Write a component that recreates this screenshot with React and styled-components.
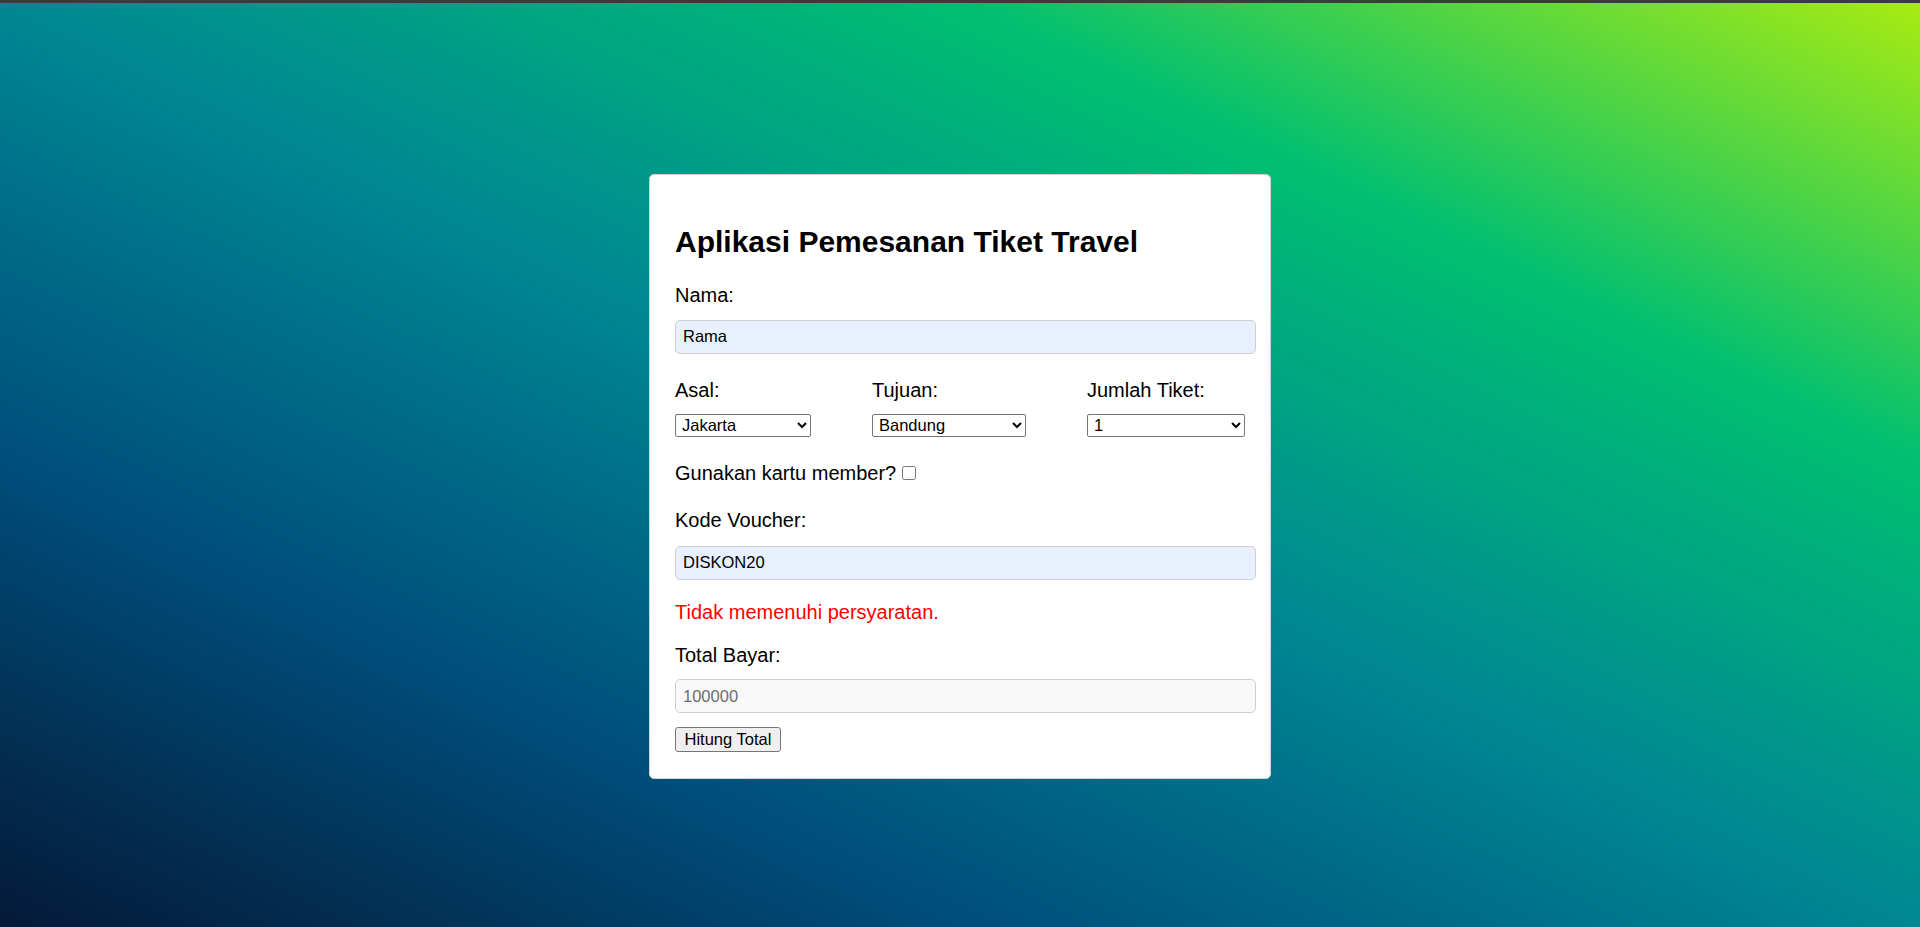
import React from "react";
import styled, { createGlobalStyle } from "styled-components";

const GlobalStyle = createGlobalStyle`
  html, body {
    margin: 0;
    padding: 0;
  }
  body {
    font-family: "Liberation Sans", Arial, sans-serif;
    color: #000;
  }
`;

const Page = styled.div`
  display: flex;
  flex-direction: column;
  min-height: 100vh;
`;

const TopStrip = styled.div`
  flex-shrink: 0;
  height: 3px;
  background-color: #3b3b3b;
`;

const Backdrop = styled.main`
  flex: 1;
  display: flex;
  justify-content: center;
  align-items: flex-start;
  padding-top: 171px;
  background: linear-gradient(to right top, #051937, #004d7a, #008793, #00bf72, #a8eb12);
`;

const Card = styled.div`
  box-sizing: border-box;
  width: 622px;
  padding: 25px 25px 26px;
  background-color: #ffffff;
  border: 1px solid #d4d4d4;
  border-radius: 5px;
`;

const Title = styled.h2`
  margin: 25px 0 25px;
  font-size: 30px;
  font-weight: 700;
`;

const Label = styled.label`
  display: block;
  font-size: 20px;
  line-height: 22.5px;
  margin-bottom: ${(p) => p.$gap || 13}px;
`;

const TextInput = styled.input`
  display: block;
  box-sizing: border-box;
  width: calc(100% + 11px);
  height: 34px;
  margin: 0 0 ${(p) => p.$after || 25}px;
  padding: 0 7px;
  font-family: "Liberation Sans", Arial, sans-serif;
  font-size: 16.5px;
  color: ${(p) => (p.readOnly ? "#6d6d6d" : "#000")};
  background-color: ${(p) => (p.readOnly ? "#f9f9f9" : "#e8f0fe")};
  border: 1px solid #cfcfcf;
  border-radius: 5px;
  outline: none;
`;

const SelectRow = styled.div`
  display: flex;
  justify-content: space-between;
  margin-bottom: 25px;
`;

const SelectColumn = styled.div`
  display: flex;
  flex-direction: column;
`;

const Select = styled.select`
  box-sizing: border-box;
  width: ${(p) => p.$width}px;
  height: 22.5px;
  padding: 0 2px;
  font-family: "Liberation Sans", Arial, sans-serif;
  font-size: 16.5px;
  color: #000;
  background-color: #fff;
  border: 1px solid #767676;
  border-radius: 2px;
`;

const CheckRow = styled.label`
  display: flex;
  align-items: center;
  font-size: 20px;
  line-height: 22.5px;
  margin-bottom: 25px;
`;

const Checkbox = styled.input`
  width: 14px;
  height: 14px;
  margin: 1px 0 0 6px;
`;

const ErrorText = styled.p`
  margin: 0 0 20.5px;
  font-size: 20px;
  line-height: 22.5px;
  color: #ff0000;
`;

const Button = styled.button`
  box-sizing: border-box;
  height: 25px;
  padding: 0 8.5px;
  font-family: "Liberation Sans", Arial, sans-serif;
  font-size: 16.5px;
  color: #000;
  background-color: #efefef;
  border: 1px solid #767676;
  border-radius: 3px;
`;

const App = () => {
  return (
    <Page>
      <GlobalStyle />
      <TopStrip />
      <Backdrop>
        <Card>
          <Title>Aplikasi Pemesanan Tiket Travel</Title>

          <Label htmlFor="nama">Nama:</Label>
          <TextInput id="nama" type="text" defaultValue="Rama" />

          <SelectRow>
            <SelectColumn>
              <Label htmlFor="asal">Asal:</Label>
              <Select id="asal" $width={136} defaultValue="Jakarta">
                <option>Jakarta</option>
                <option>Bandung</option>
                <option>Surabaya</option>
              </Select>
            </SelectColumn>
            <SelectColumn>
              <Label htmlFor="tujuan">Tujuan:</Label>
              <Select id="tujuan" $width={154} defaultValue="Bandung">
                <option>Jakarta</option>
                <option>Bandung</option>
                <option>Yogyakarta</option>
              </Select>
            </SelectColumn>
            <SelectColumn>
              <Label htmlFor="jumlah">Jumlah Tiket:</Label>
              <Select id="jumlah" $width={158} defaultValue="1">
                <option>1</option>
                <option>2</option>
                <option>3</option>
              </Select>
            </SelectColumn>
          </SelectRow>

          <CheckRow>
            Gunakan kartu member?
            <Checkbox type="checkbox" />
          </CheckRow>

          <Label htmlFor="voucher" $gap={14}>Kode Voucher:</Label>
          <TextInput id="voucher" type="text" defaultValue="DISKON20" $after={21} />

          <ErrorText>Tidak memenuhi persyaratan.</ErrorText>

          <Label htmlFor="total">Total Bayar:</Label>
          <TextInput id="total" type="text" readOnly value="100000" $after={14} />

          <Button type="button">Hitung Total</Button>
        </Card>
      </Backdrop>
    </Page>
  );
};

export default App;
